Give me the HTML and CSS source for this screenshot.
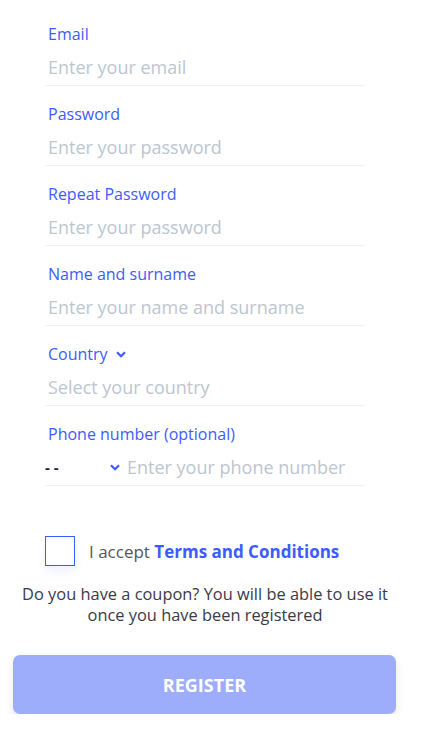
FILE: index.html
```html
<!DOCTYPE html>
<html>
<head>
    <meta charset="utf-8">
    <meta name="viewport" content="width=device-width, initial-scale=1">
    <title>Register</title>
    <link rel="stylesheet" href="styles.css">
</head>
<body>
    <form class="register">
        <div class="fields">
            <div class="field">
                <label>Email</label>
                <input type="email" placeholder="Enter your email">
            </div>
            <div class="field">
                <label>Password</label>
                <input type="password" placeholder="Enter your password">
            </div>
            <div class="field">
                <label>Repeat Password</label>
                <input type="password" placeholder="Enter your password">
            </div>
            <div class="field">
                <label>Name and surname</label>
                <input type="text" placeholder="Enter your name and surname">
            </div>
            <div class="field">
                <label>Country
                    <svg class="chevron" viewBox="0 0 10 7" width="10" height="7"><path d="M1 1.2l4 4 4-4" fill="none" stroke="#3d5cff" stroke-width="2.2"/></svg>
                </label>
                <input type="text" placeholder="Select your country">
            </div>
            <div class="field">
                <label>Phone number (optional)</label>
                <div class="phone">
                    <span class="prefix">- -</span>
                    <svg class="chevron" viewBox="0 0 10 7" width="10" height="7"><path d="M1 1.2l4 4 4-4" fill="none" stroke="#3d5cff" stroke-width="2.2"/></svg>
                    <input type="tel" placeholder="Enter your phone number">
                </div>
            </div>
        </div>

        <div class="terms">
            <span class="checkbox"></span>
            <span>I accept <a href="#">Terms and Conditions</a></span>
        </div>

        <p class="coupon">Do you have a coupon? You will be able to use it<br>once you have been registered</p>

        <button type="button" class="register-btn">REGISTER</button>
    </form>
</body>
</html>
```

FILE: styles.css
```css
body {
    margin: 0;
    background-color: #fff;
    font-family: "Open Sans", Lato, sans-serif;
}

.register {
    width: 428px;
    padding-top: 24px;
}

.fields {
    margin-left: 45px;
    width: 319px;
    display: flex;
    flex-direction: column;
    gap: 18px;
}

.field {
    border-bottom: 1px solid #eef0f3;
}

.field label {
    display: flex;
    align-items: center;
    gap: 8px;
    height: 20px;
    padding-left: 3px;
    font-size: 16px;
    color: #3d5cff;
}

.field input {
    display: block;
    width: 100%;
    box-sizing: border-box;
    height: 41px;
    padding: 5px 3px 0;
    border: none;
    outline: none;
    font-family: inherit;
    font-size: 18px;
    color: #333;
    background: transparent;
}

.field input::placeholder {
    color: #bcc6d0;
}

.phone {
    display: flex;
    align-items: center;
}

.phone .prefix {
    flex-shrink: 0;
    width: 65px;
    padding-top: 5px;
    font-size: 15px;
    font-weight: bold;
    color: #1a1a2e;
}

.phone .chevron {
    margin: 5px 0 0 0;
    flex-shrink: 0;
}

.phone input {
    padding-left: 7px;
}

.terms {
    display: flex;
    align-items: center;
    gap: 14px;
    margin: 50px 0 0 45px;
    font-size: 17px;
    color: #555;
}

.checkbox {
    width: 28px;
    height: 28px;
    border: 1px solid #3d5cff;
    box-shadow: 0 6px 10px rgba(61, 92, 255, 0.08);
}

.terms a {
    color: #3d5cff;
    font-weight: bold;
    text-decoration: none;
}

.coupon {
    margin: 17px 0 0;
    width: 410px;
    text-align: center;
    font-size: 16.4px;
    line-height: 21px;
    color: #3a3a48;
}

.register-btn {
    display: block;
    margin: 30px 0 0 13px;
    width: 383px;
    height: 59px;
    border: none;
    border-radius: 7px;
    background-color: #9dadfb;
    box-shadow: 0 4px 8px rgba(0, 0, 0, 0.1);
    color: #fff;
    font-family: inherit;
    font-size: 18px;
    font-weight: bold;
}
```
